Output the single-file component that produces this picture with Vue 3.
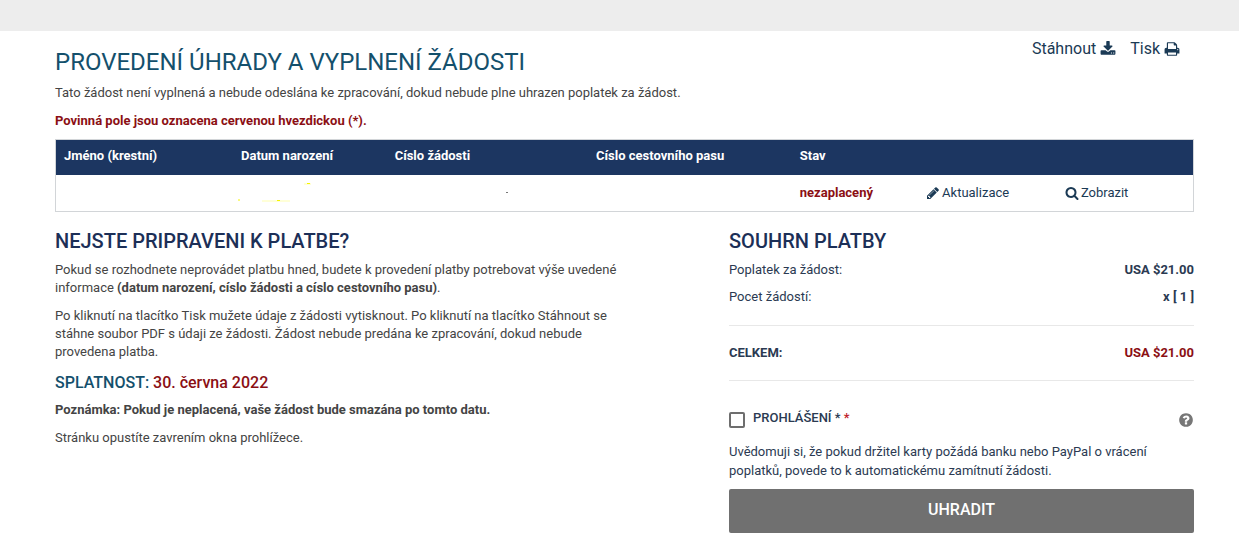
<template>
  <div class="page">
    <div class="topbar"></div>

    <main class="container">
      <header class="header">
        <h1>PROVEDENÍ ÚHRADY A VYPLNENÍ ŽÁDOSTI</h1>
        <nav class="actions">
          <a href="#">
            Stáhnout
            <svg viewBox="0 0 1792 1792"><path :d="icons.download" /></svg>
          </a>
          <a href="#">
            Tisk
            <svg viewBox="0 0 1792 1792"><path :d="icons.print" /></svg>
          </a>
        </nav>
      </header>

      <p>
        Tato žádost není vyplnená a nebude odeslána ke zpracování, dokud nebude
        plne uhrazen poplatek za žádost.
      </p>
      <p class="required">
        Povinná pole jsou oznacena cervenou hvezdickou (*).
      </p>

      <table class="applications">
        <thead>
          <tr>
            <th v-for="(column, i) in columns" :key="i" :style="{ width: column.width }">
              {{ column.label }}
            </th>
          </tr>
        </thead>
        <tbody>
          <tr>
            <td></td>
            <td>
              <svg class="marks" viewBox="0 0 90 20" preserveAspectRatio="xMinYMid">
                <path d="M63 1h7M21 18h28" stroke="#ffffb0" />
                <path d="M36 17.500h3M-3 17h2M66 0.500h3" stroke="#f4f400" />
              </svg>
            </td>
            <td>
              <svg class="marks" viewBox="0 0 120 20" preserveAspectRatio="xMinYMid">
                <path d="M111 9.500h2" stroke="#777" />
              </svg>
            </td>
            <td></td>
            <td><strong class="red">nezaplacený</strong></td>
            <td>
              <a href="#">
                <svg viewBox="0 0 1792 1792"><path :d="icons.pencil" /></svg>
                Aktualizace
              </a>
            </td>
            <td>
              <a href="#">
                <svg viewBox="0 0 1792 1792"><path :d="icons.search" /></svg>
                Zobrazit
              </a>
            </td>
          </tr>
        </tbody>
      </table>

      <div class="columns">
        <section>
          <h2>NEJSTE PRIPRAVENI K PLATBE?</h2>
          <p>
            Pokud se rozhodnete neprovádet platbu hned, budete k provedení
            platby potrebovat výše uvedené informace
            <strong>(datum narození, císlo žádosti a císlo cestovního pasu)</strong>.
          </p>
          <p>
            Po kliknutí na tlacítko Tisk mužete údaje z žádosti vytisknout. Po
            kliknutí na tlacítko Stáhnout se stáhne soubor PDF s údaji ze
            žádosti. Žádost nebude predána ke zpracování, dokud nebude
            provedena platba.
          </p>
          <h3>SPLATNOST: <span class="red">30. června 2022</span></h3>
          <p>
            <strong>Poznámka: Pokud je neplacená, vaše žádost bude smazána po tomto datu.</strong>
          </p>
          <p>Stránku opustíte zavrením okna prohlížece.</p>
        </section>

        <section class="summary">
          <h2>SOUHRN PLATBY</h2>
          <div class="line">
            <span>Poplatek za žádost:</span>
            <strong>USA ${{ total }}</strong>
          </div>
          <div class="line">
            <span>Pocet žádostí:</span>
            <strong>x [ {{ count }} ]</strong>
          </div>
          <div class="line total">
            <strong>CELKEM:</strong>
            <strong class="red">USA ${{ total }}</strong>
          </div>

          <div class="declaration">
            <input id="declaration" v-model="agreed" type="checkbox" />
            <label for="declaration">PROHLÁŠENÍ * <span class="star">*</span></label>
            <button class="help" type="button" aria-label="Nápověda">
              <svg viewBox="0 0 1792 1792"><path :d="icons.question" /></svg>
            </button>
          </div>
          <p class="consent">
            Uvědomuji si, že pokud držitel karty požádá banku nebo PayPal o
            vrácení poplatků, povede to k automatickému zamítnutí žádosti.
          </p>
          <button class="pay" type="button">UHRADIT</button>
        </section>
      </div>
    </main>
  </div>
</template>

<script setup>
import { ref, computed } from "vue";

const agreed = ref(false);
const count = ref(1);
const price = 21;

const total = computed(() => (price * count.value).toFixed(2));

const columns = [
  { label: "Jméno (krestní)", width: "15.6%" },
  { label: "Datum narození", width: "13.5%" },
  { label: "Císlo žádosti", width: "17.7%" },
  { label: "Císlo cestovního pasu", width: "17.9%" },
  { label: "Stav", width: "11.1%" },
  { label: "", width: "12.2%" },
  { label: "", width: "auto" },
];

const icons = {
  download:
    "M1344 1344q0-26-19-45t-45-19-45 19-19 45 19 45 45 19 45-19 19-45zm256 0q0-26-19-45t-45-19-45 19-19 45 19 45 45 19 45-19 19-45zm128-224v320q0 40-28 68t-68 28h-1472q-40 0-68-28t-28-68v-320q0-40 28-68t68-28h465l135 136q58 56 136 56t136-56l136-136h464q40 0 68 28t28 68zm-325-569q17 41-14 70l-448 448q-18 19-45 19t-45-19l-448-448q-31-29-14-70 17-39 59-39h256v-448q0-26 19-45t45-19h256q26 0 45 19t19 45v448h256q42 0 59 39z",
  print:
    "M448 1536h896v-256h-896v256zm0-640h896v-384h-160q-40 0-68-28t-28-68v-160h-640v640zm1152 64q0-26-19-45t-45-19-45 19-19 45 19 45 45 19 45-19 19-45zm128 0v416q0 13-9.500 22.500t-22.500 9.500h-224v160q0 40-28 68t-68 28h-960q-40 0-68-28t-28-68v-160h-224q-13 0-22.500-9.500t-9.500-22.500v-416q0-79 56.500-135.500t135.500-56.500h64v-544q0-40 28-68t68-28h672q40 0 88 20t76 48l152 152q28 28 48 76t20 88v256h64q79 0 135.500 56.500t56.500 135.500z",
  pencil:
    "M491 1536l91-91-235-235-91 91v107h128v128h107zm523-928q0-22-22-22-10 0-17 7l-542 542q-7 7-7 17 0 22 22 22 10 0 17-7l542-542q7-7 7-17zm-54-192l416 416-832 832h-416v-416zm683 96q0 53-37 90l-166 166-416-416 166-165q36-38 90-38 53 0 91 38l235 234q37 39 37 91z",
  search:
    "M1216 832q0-185-131.500-316.500t-316.500-131.500-316.500 131.500-131.500 316.500 131.500 316.500 316.500 131.500 316.500-131.500 131.500-316.500zm512 832q0 52-38 90t-90 38q-54 0-90-38l-343-342q-179 124-399 124-143 0-273.500-55.500t-225-150-150-225-55.500-273.500 55.500-273.500 150-225 225-150 273.500-55.500 273.500 55.500 225 150 150 225 55.500 273.500q0 220-124 399l343 343q37 37 37 90z",
  question:
    "M1024 1376v-192q0-14-9-23t-23-9h-192q-14 0-23 9t-9 23v192q0 14 9 23t23 9h192q14 0 23-9t9-23zm256-672q0-88-55.500-163t-138.500-116-170-41q-243 0-371 213-15 24 8 42l132 100q7 6 19 6 16 0 25-12 53-68 86-92 34-24 86-24 48 0 85.500 26t37.500 59q0 38-20 61t-68 45q-63 28-115.500 86.500t-52.500 125.500v36q0 14 9 23t23 9h192q14 0 23-9t9-23q0-19 21.500-49.500t54.500-49.500q32-18 49-28.500t46-35 44.500-48 28-60.500 12.500-81zm384 192q0 209-103 385.500t-279.500 279.500-385.500 103-385.500-103-279.500-279.500-103-385.500 103-385.500 279.500-279.500 385.500-103 385.500 103 279.500 279.500 103 385.500z",
};
</script>

<style>
body {
  background: #fff;
}
</style>

<style scoped>
.page {
  font-family: Roboto, "Liberation Sans", sans-serif;
  font-size: 13px;
  line-height: 18px;
  color: #444;
}
.topbar {
  height: 31px;
  background: #ededed;
}
.container {
  padding: 0 45px 9px 55px;
}
.header {
  display: flex;
  justify-content: space-between;
  padding: 6px 0 7px;
}
h1,
h2,
h3,
p {
  margin: 0;
}
h1 {
  padding-top: 10px;
  font-size: 24px;
  font-weight: 400;
  line-height: 30px;
  color: #14506c;
}
h2 {
  margin-bottom: 8px;
  font-size: 20px;
  font-weight: 500;
  line-height: 24px;
  color: #1c2f57;
}
h3 {
  margin-bottom: 6px;
  font-size: 16px;
  font-weight: 500;
  line-height: 24px;
  color: #14506c;
}
p {
  margin-bottom: 10px;
}
strong {
  font-weight: 700;
}
a {
  display: inline-flex;
  align-items: center;
  gap: 4px;
  color: #1b3a55;
  text-decoration: none;
}
svg {
  display: block;
  fill: currentColor;
}
.actions {
  display: flex;
  align-items: flex-start;
  gap: 14px;
  padding-right: 14px;
  font-size: 16px;
  line-height: 24px;
}
.actions svg {
  width: 16px;
  height: 16px;
}
.required {
  margin-bottom: 9px;
  font-weight: 700;
  color: #8b0f14;
}
.red {
  color: #8b0f14;
}

.applications {
  width: 100%;
  table-layout: fixed;
  border-collapse: collapse;
  border: 1px solid #d2d5d8;
}
.applications th,
.applications td {
  box-sizing: border-box;
  height: 36px;
  padding: 8px;
  text-align: left;
}
.applications th {
  height: 35px;
  padding: 7px 8px 9px;
  font-weight: 700;
  color: #fff;
  background: #1c3661;
}
.applications a {
  gap: 2px;
  vertical-align: top;
}
.applications a svg {
  width: 14px;
  height: 14px;
}
.applications .marks {
  width: 100%;
  height: 20px;
  overflow: visible;
}

.columns {
  display: grid;
  grid-template-columns: 570fr 465fr;
  gap: 104px;
  padding-top: 17px;
}
.summary {
  color: #2b3a52;
}
.line {
  display: flex;
  justify-content: space-between;
  margin-bottom: 9px;
}
.line.total {
  margin: 19px 0 28px;
  padding: 18px 0;
  border-top: 1px solid #e8e8e8;
  border-bottom: 1px solid #e8e8e8;
}
.declaration {
  display: flex;
  align-items: flex-start;
  gap: 8px;
  margin-bottom: 14px;
}
.declaration input {
  width: 16px;
  height: 16px;
  margin: 3px 0 0;
  appearance: none;
  border: 2px solid #6e6e6e;
  border-radius: 2px;
  background: #fff;
}
.declaration input:checked {
  background: #1c3661;
}
.declaration label {
  flex: 1;
  font-weight: 500;
}
.star {
  color: #c0202a;
}
.help {
  margin-top: 3px;
  padding: 0;
  border: 0;
  color: #777;
  background: none;
}
.help svg {
  width: 16px;
  height: 16px;
}
.consent {
  line-height: 19px;
  margin-bottom: 9px;
}
.pay {
  display: block;
  width: 100%;
  height: 44px;
  padding: 0 0 2px;
  border: 0;
  border-radius: 2px;
  font-family: inherit;
  font-size: 16px;
  font-weight: 500;
  color: #fff;
  background: #707070;
}
</style>
